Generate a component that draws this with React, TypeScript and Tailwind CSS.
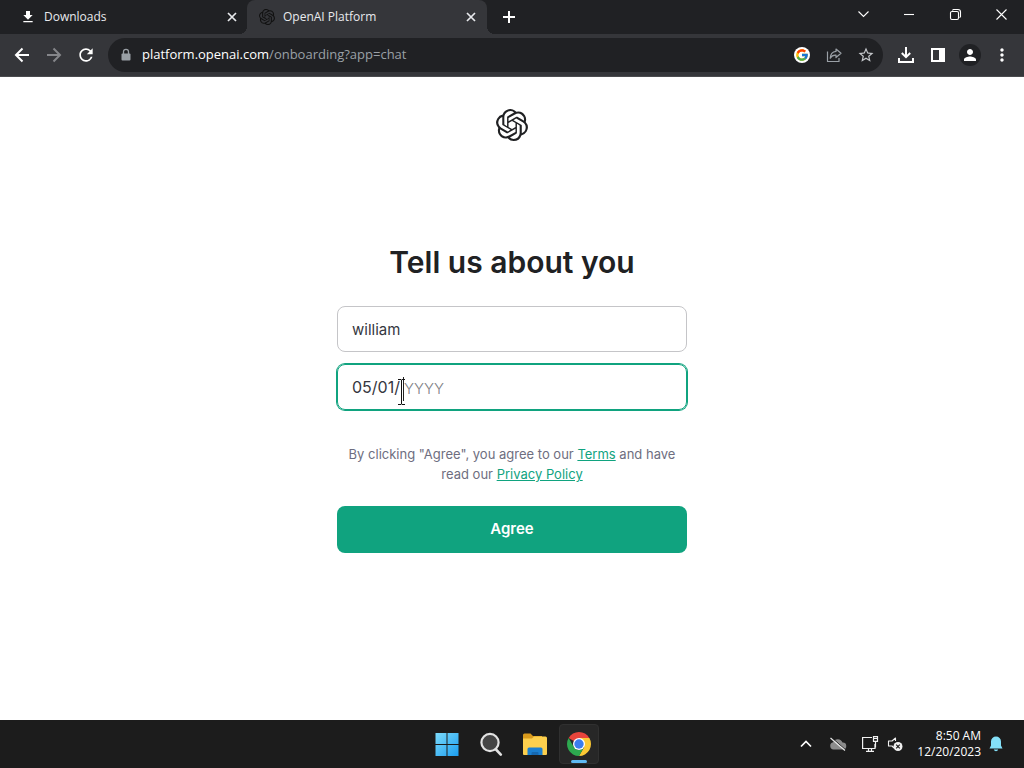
import React from 'react';
import { SiOpenai } from 'react-icons/si';
import { FcGoogle } from 'react-icons/fc';
import { MdDownload, MdMoreVert, MdPerson, MdRefresh, MdStarBorder } from 'react-icons/md';

const CloseIcon: React.FC = () => (
  <svg viewBox="0 0 10 10" className="size-[10px]" fill="none" stroke="currentColor" strokeWidth="1.700">
    <path d="M1 1l8 8M9 1L1 9" />
  </svg>
);

const PlusIcon: React.FC = () => (
  <svg viewBox="0 0 12 12" className="size-3" fill="none" stroke="currentColor" strokeWidth="2">
    <path d="M6 0v12M0 6h12" />
  </svg>
);

const BackIcon: React.FC = () => (
  <svg viewBox="0 0 16 16" className="size-4" fill="none" stroke="currentColor" strokeWidth="2">
    <path d="M15 8H2M8.500 1.500L2 8l6.500 6.500" />
  </svg>
);

const ForwardIcon: React.FC = () => (
  <svg viewBox="0 0 16 16" className="size-4" fill="none" stroke="currentColor" strokeWidth="2">
    <path d="M1 8h13M7.500 1.500L14 8l-6.500 6.500" />
  </svg>
);

const LockIcon: React.FC = () => (
  <svg viewBox="0 0 12 14" className="h-[14px] w-3" fill="none">
    <path d="M3.500 6V3.800a2.500 2.500 0 0 1 5 0V6" stroke="currentColor" strokeWidth="1.300" />
    <rect x="1.500" y="5.500" width="9" height="7" rx="1" fill="currentColor" />
  </svg>
);

const ShareIcon: React.FC = () => (
  <svg viewBox="0 0 16 16" className="size-4" fill="none" stroke="currentColor" strokeWidth="1.200" strokeLinejoin="round">
    <path d="M1.500 4.500v10h11.500v-3.500" />
    <path d="M10 2l5 4.300-5 4.200V8.200C7.300 8 5.400 9 4.200 11.300 4.400 7.500 6.500 4.800 10 4.400z" />
  </svg>
);

const DownloadsIcon: React.FC = () => (
  <svg viewBox="0 0 18 18" className="size-[18px]" fill="none" stroke="currentColor" strokeWidth="2">
    <path d="M9 1v10M4.800 7L9 11.200 13.200 7" />
    <path d="M2 12v4h14v-4" />
  </svg>
);

const SidePanelIcon: React.FC = () => (
  <svg viewBox="0 0 16 16" className="size-4" fill="currentColor">
    <path d="M1 1h14v14H1zM3 3v10h6V3z" fillRule="evenodd" />
  </svg>
);

const WindowsIcon: React.FC = () => (
  <svg viewBox="0 0 24 24" className="size-6">
    <defs>
      <linearGradient id="win" gradientUnits="userSpaceOnUse" x1="0" y1="0" x2="24" y2="24">
        <stop offset="0" stopColor="#7fdcfb" />
        <stop offset="1" stopColor="#1a9df0" />
      </linearGradient>
    </defs>
    <path d="M.5 1h11v11H.5zM12.500 1h11v11h-11zM.5 13h11v11H.5zM12.500 13h11v11h-11z" fill="url(#win)" />
  </svg>
);

const SearchIcon: React.FC = () => (
  <svg viewBox="0 0 24 24" className="size-6" fill="none">
    <path d="M16.500 17l5.300 5.600" stroke="#e2e2e2" strokeWidth="2.600" strokeLinecap="round" />
    <circle cx="11" cy="10.500" r="8.600" fill="#454545" stroke="#e2e2e2" strokeWidth="2.200" />
  </svg>
);

const FolderIcon: React.FC = () => (
  <svg viewBox="0 0 26 24" className="h-6 w-[26px]">
    <path d="M1 3a1.500 1.500 0 0 1 1.500-1.500h6l2.500 2.500H20v6H1z" fill="#d99a1c" />
    <path d="M1 6.500h9l2-2h11.500A1.500 1.500 0 0 1 25 6v16a1 1 0 0 1-1 1H2a1 1 0 0 1-1-1z" fill="#fccf4d" />
    <path d="M5.500 23v-6a1.500 1.500 0 0 1 1.500-1.500h12a1.500 1.500 0 0 1 1.500 1.500v6z" fill="#1b7fd0" />
    <path d="M9.500 23v-2a1 1 0 0 1 1-1h5a1 1 0 0 1 1 1v2z" fill="#1668b0" />
  </svg>
);

const ChromeIcon: React.FC = () => (
  <svg viewBox="0 0 24 24" className="size-6">
    <path d="M12 12L1.610 6A12 12 0 0 1 22.390 6z" fill="#e8453c" />
    <path d="M12 6h10.390A12 12 0 0 1 12 24l5.200-9z" fill="#fcc934" />
    <path d="M1.610 6l5.190 9 .4.600A6 6 0 0 0 17.200 15L12 24A12 12 0 0 1 1.610 6z" fill="#2da94f" />
    <circle cx="12" cy="12" r="6" fill="#fff" />
    <circle cx="12" cy="12" r="4.700" fill="#3b7ded" />
  </svg>
);

const CloudOffIcon: React.FC = () => (
  <svg viewBox="0 0 18 14" className="h-[14px] w-[18px]">
    <path d="M4.500 12.500a3.700 3.700 0 0 1-.3-7.300A5 5 0 0 1 13.500 5.500a3.500 3.500 0 0 1 .5 7z" fill="#8c8c8c" />
    <path d="M2.300 .3l14 12.300" stroke="#1c1c1c" strokeWidth="1" />
    <path d="M1.500 1l14.500 12.500" stroke="#e6e6e6" strokeWidth="1.200" />
  </svg>
);

const NetworkIcon: React.FC = () => (
  <svg viewBox="0 0 18 18" className="size-[18px]" fill="none" stroke="#f1f1f1" strokeWidth="1.200">
    <path d="M11 2.500H1.600v11H14V9M5 16.400h8M7.500 13.500v3M10.500 13.500v3" />
    <path d="M12.500 1.600h4v4.800h-4zM14.500 6.400v6M12.500 3.500h4" />
  </svg>
);

const MutedIcon: React.FC = () => (
  <svg viewBox="0 0 16 16" className="size-4" fill="none">
    <path d="M8.500 5V2L5 5H1.500v5H5l2 2" stroke="#f1f1f1" strokeWidth="1.100" strokeLinejoin="round" />
    <circle cx="11" cy="10.500" r="4.500" fill="#f1f1f1" />
    <path d="M9.200 8.700l3.600 3.600M12.800 8.700l-3.600 3.600" stroke="#1c1c1c" strokeWidth="1.200" />
  </svg>
);

const BellIcon: React.FC = () => (
  <svg viewBox="0 0 14 16" className="h-4 w-[14px]" fill="#84e0f8">
    <path d="M7 .5a5 5 0 0 0-5 5v4L.5 12.500h13L12 9.500v-4a5 5 0 0 0-5-5zM4.800 13.500a2.300 2.300 0 0 0 4.400 0z" />
  </svg>
);

const windowControls = [
  { name: 'Search tabs', path: 'M1.500 3.500L6.500 8.500L11.500 3.500' },
  { name: 'Minimize', path: 'M1 6.500H11' },
  { name: 'Restore', path: 'M3.500 2.500a1.500 1.500 0 0 1 1-1H9a2.500 2.500 0 0 1 2.500 2.500v4.500a1.500 1.500 0 0 1-1 1M3 3.500h5A1.500 1.500 0 0 1 9.500 5v5A1.500 1.500 0 0 1 8 11.500H3A1.500 1.500 0 0 1 1.500 10V5A1.500 1.500 0 0 1 3 3.500z' },
  { name: 'Close', path: 'M1.500 1.500l10 10M11.500 1.500l-10 10' },
];

const TabStrip: React.FC = () => (
  <div className="flex h-[34px] items-stretch bg-[#202124] text-xs text-[#e8eaed]">
    <div className="flex w-[247px] items-center pr-[7px] pl-5">
      <MdDownload className="size-4 shrink-0 text-white" />
      <span className="ml-2 flex-1">Downloads</span>
      <button aria-label="Close Downloads" className="flex size-4 items-center justify-center">
        <CloseIcon />
      </button>
    </div>
    <div className="relative flex w-[240px] items-center rounded-t-lg bg-[#35363a] pr-2 pl-3">
      <span className="absolute bottom-0 -left-2 size-2 bg-[radial-gradient(circle_at_0_0,transparent_8px,#35363a_8px)]" />
      <span className="absolute -right-2 bottom-0 size-2 bg-[radial-gradient(circle_at_100%_0,transparent_8px,#35363a_8px)]" />
      <SiOpenai className="size-4 shrink-0 text-[#111]" />
      <span className="ml-2 flex-1">OpenAI Platform</span>
      <button aria-label="Close OpenAI Platform" className="flex size-4 items-center justify-center">
        <CloseIcon />
      </button>
    </div>
    <button aria-label="New tab" className="ml-3 flex w-5 items-center justify-center text-white">
      <PlusIcon />
    </button>
    <div className="ml-auto flex">
      {windowControls.map((control) => (
        <button key={control.name} aria-label={control.name} className="flex h-7 w-[46px] items-center justify-center">
          <svg viewBox="0 0 13 13" className="size-[13px]" fill="none" stroke="#fff" strokeWidth="1.100">
            <path d={control.path} />
          </svg>
        </button>
      ))}
    </div>
  </div>
);

const Toolbar: React.FC = () => (
  <div className="flex h-[43px] items-center border-b border-[#4a4b4e] bg-[#35363a] px-[6px] text-white">
    <button aria-label="Back" className="flex size-8 items-center justify-center">
      <BackIcon />
    </button>
    <button aria-label="Forward" className="flex size-8 items-center justify-center text-[#85868a]">
      <ForwardIcon />
    </button>
    <button aria-label="Reload" className="flex size-8 items-center justify-center">
      <MdRefresh className="size-5" />
    </button>
    <div className="ml-[6px] flex h-[34px] flex-1 items-center rounded-full bg-[#202124] pr-px pl-3 text-[#9aa0a6]">
      <LockIcon />
      <p className="ml-[10px] flex-1 text-[13px]">
        <span className="text-white">platform.openai.com</span>/onboarding?app=chat
      </p>
      <button aria-label="Google" className="flex size-8 items-center justify-center">
        <span className="flex size-4 items-center justify-center rounded-full bg-white">
          <FcGoogle className="size-[14px]" />
        </span>
      </button>
      <button aria-label="Share" className="flex size-8 items-center justify-center">
        <ShareIcon />
      </button>
      <button aria-label="Bookmark" className="flex size-8 items-center justify-center text-[#c4c7cb]">
        <MdStarBorder className="size-[18px]" />
      </button>
    </div>
    <button aria-label="Downloads" className="ml-[7px] flex size-8 items-center justify-center">
      <DownloadsIcon />
    </button>
    <button aria-label="Side panel" className="flex size-8 items-center justify-center">
      <SidePanelIcon />
    </button>
    <button aria-label="Profile" className="flex size-8 items-center justify-center">
      <span className="flex size-[22px] items-center justify-center rounded-full bg-[#202124]">
        <MdPerson className="size-[18px]" />
      </span>
    </button>
    <button aria-label="Menu" className="flex size-8 items-center justify-center">
      <MdMoreVert className="size-5" />
    </button>
  </div>
);

const Onboarding: React.FC = () => (
  <main className="flex flex-1 flex-col items-center bg-white px-4 pt-8 font-['Inter','Liberation_Sans',sans-serif] text-[#202123]">
    <SiOpenai className="size-8" />
    <h1 className="mt-[101px] text-[30px] leading-10 font-semibold">Tell us about you</h1>
    <form className="mt-6 flex w-full max-w-[350px] flex-col">
      <input
        aria-label="Full name"
        defaultValue="william"
        className="h-[46px] rounded-lg border border-[#c5c5c8] px-[14px] text-[15px] text-[#353740] outline-none"
      />
      <label className="relative mt-3 flex h-[46px] items-center rounded-lg border border-[#10a37f] px-[14px] text-base text-[#353740] ring-1 ring-[#10a37f]">
        <input aria-label="Birthday" defaultValue="05/01/" className="w-[52px] outline-none" />
        <span className="pt-1 text-[15px] font-light text-[#808085]">YYYY</span>
        <span className="absolute top-3 left-[65px] h-6 w-px bg-[#222]" />
        <svg viewBox="0 0 7 26" className="absolute top-[14px] left-[60px] h-[26px] w-[7px]" fill="none" stroke="#111">
          <path d="M0 .5h3l.5.5.5-.5h3M3.500 1v24M0 25.500h3l.5-.5.5.5h3" />
        </svg>
      </label>
      <p className="mt-[34px] text-center text-[13px] leading-5 text-[#6e6e80]">
        By clicking "Agree", you agree to our{' '}
        <a href="#terms" className="text-[#10a37f] underline">Terms</a> and have read our{' '}
        <a href="#privacy" className="text-[#10a37f] underline">Privacy Policy</a>
      </p>
      <button type="button" className="mt-[22px] h-[47px] rounded-lg bg-[#10a37f] text-[15px] font-semibold text-white">
        Agree
      </button>
    </form>
  </main>
);

const Taskbar: React.FC = () => (
  <footer className="grid h-12 grid-cols-[1fr_auto_1fr] items-center bg-[#1c1c1c] text-white">
    <span />
    <nav className="flex gap-1 pl-[2px]">
      <button aria-label="Start" className="flex size-10 items-center justify-center"><WindowsIcon /></button>
      <button aria-label="Search" className="flex size-10 items-center justify-center"><SearchIcon /></button>
      <button aria-label="File Explorer" className="flex size-10 items-center justify-center"><FolderIcon /></button>
      <button aria-label="Chrome" className="relative flex size-10 items-center justify-center rounded border border-[#303030] bg-[#272727]">
        <ChromeIcon />
        <span className="absolute bottom-0 h-[3px] w-4 rounded-full bg-[#5fb9f2]" />
      </button>
    </nav>
    <div className="flex items-center justify-end pr-[21px]">
      <svg viewBox="0 0 12 8" className="h-2 w-3" fill="none" stroke="#fff" strokeWidth="1.700">
        <path d="M1 6.500l5-5 5 5" />
      </svg>
      <div className="ml-[17px] flex"><CloudOffIcon /></div>
      <div className="ml-[14px] flex"><NetworkIcon /></div>
      <div className="ml-2 flex"><MutedIcon /></div>
      <p className="mr-2 ml-[14px] text-right text-xs leading-4">
        8:50 AM<br />12/20/2023
      </p>
      <BellIcon />
    </div>
  </footer>
);

const App: React.FC = () => {
  return (
    <div className="flex min-h-screen flex-col font-['Open_Sans','Noto_Sans',sans-serif]">
      <header>
        <TabStrip />
        <Toolbar />
      </header>
      <Onboarding />
      <Taskbar />
    </div>
  );
};

export default App;
